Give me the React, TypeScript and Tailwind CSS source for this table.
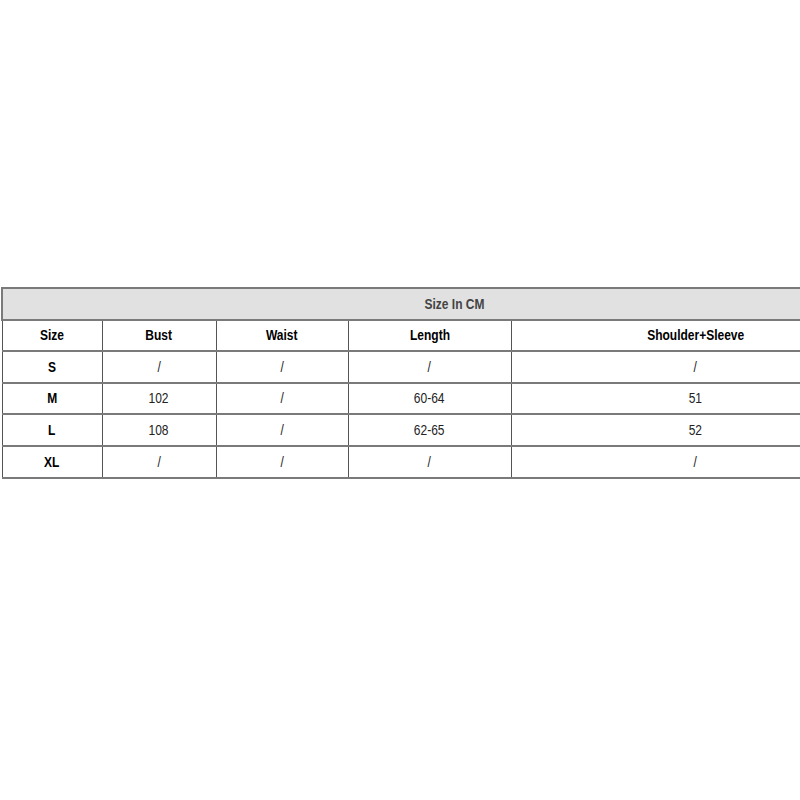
const rows = [
  ["S", "/", "/", "/", "/"],
  ["M", "102", "/", "60-64", "51"],
  ["L", "108", "/", "62-65", "52"],
  ["XL", "/", "/", "/", "/"],
];

const heads = ["Size", "Bust", "Waist", "Length", "Shoulder+Sleeve"];

// the source uses a narrow face; squeeze Liberation Sans to its width
const Txt = ({ children }: { children: React.ReactNode }) => (
  <span className="inline-block scale-x-[0.8]">{children}</span>
);

export default function App() {
  return (
    <div className="w-[800px] h-[800px] bg-white overflow-hidden pt-[287px] pl-[1px] font-['Liberation_Sans_Narrow','Liberation_Sans',Arial,sans-serif]">
      <table className="w-[880px] border-collapse table-fixed text-[15px] text-black">
        <colgroup>
          <col className="w-[100px]" />
          <col className="w-[114px]" />
          <col className="w-[132px]" />
          <col className="w-[163px]" />
          <col />
        </colgroup>
        <thead>
          <tr className="h-[31.6px]">
            <th
              colSpan={5}
              className="bg-[#e1e1e1] border-2 border-[#7a7a7a] font-bold text-[#444] text-center p-0 pl-[28px]"
            >
              <Txt>Size In CM</Txt>
            </th>
          </tr>
          <tr className="h-[31.6px]">
            {heads.map((h) => (
              <th key={h} className="border-y-2 border-x border-[#7a7a7a] border-x-[#555] font-bold text-center p-0">
                <Txt>{h}</Txt>
              </th>
            ))}
          </tr>
        </thead>
        <tbody>
          {rows.map((r, i) => (
            <tr key={i} className="h-[31.6px]">
              {r.map((c, j) => (
                <td
                  key={j}
                  className={
                    "border-y-2 border-x border-[#7a7a7a] border-x-[#555] text-center p-0 " +
                    (j === 0 ? "font-bold" : "font-normal text-[#222]")
                  }
                >
                  <Txt>{c}</Txt>
                </td>
              ))}
            </tr>
          ))}
        </tbody>
      </table>
    </div>
  );
}
